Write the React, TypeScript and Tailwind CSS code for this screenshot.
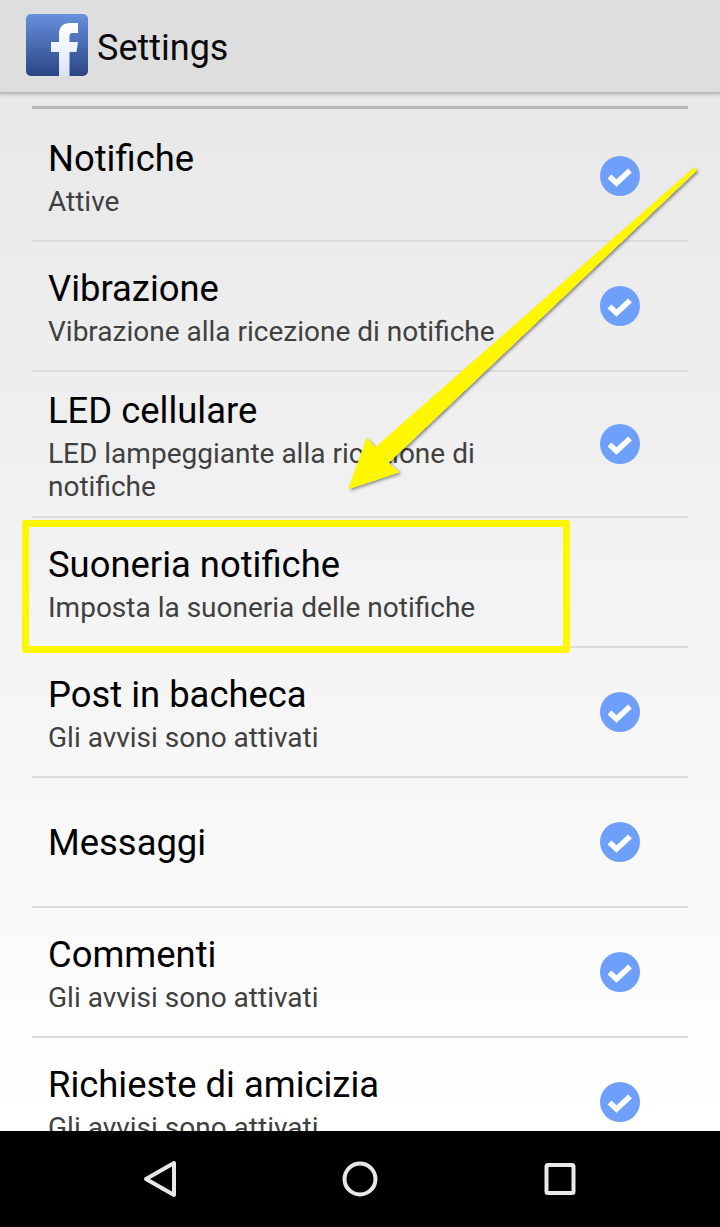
import React from 'react';

interface SettingRow {
  title: string;
  sub?: string;
  checked: boolean;
  tall?: boolean;
}

const rows: SettingRow[] = [
  { title: 'Notifiche', sub: 'Attive', checked: true },
  { title: 'Vibrazione', sub: 'Vibrazione alla ricezione di notifiche', checked: true },
  { title: 'LED cellulare', sub: 'LED lampeggiante alla ricezione di notifiche', checked: true, tall: true },
  { title: 'Suoneria notifiche', sub: 'Imposta la suoneria delle notifiche', checked: false },
  { title: 'Post in bacheca', sub: 'Gli avvisi sono attivati', checked: true },
  { title: 'Messaggi', checked: true },
  { title: 'Commenti', sub: 'Gli avvisi sono attivati', checked: true },
  { title: 'Richieste di amicizia', sub: 'Gli avvisi sono attivati', checked: true },
];

function CheckBadge() {
  return (
    <svg width="40" height="40" viewBox="0 0 40 40" className="shrink-0">
      <circle cx="20" cy="20" r="20" fill="#6ea0fb" />
      <path d="M9.500 20.500 L16.500 27 L30 14.500" fill="none" stroke="#fff" strokeWidth="5.500" />
    </svg>
  );
}

function FbLogo() {
  return (
    <svg width="62" height="62" viewBox="0 0 62 62" className="shrink-0">
      <defs>
        <linearGradient id="fbBg" x1="0" y1="0" x2="0" y2="1">
          <stop offset="0" stopColor="#6790dd" />
          <stop offset="1" stopColor="#2a4483" />
        </linearGradient>
        <linearGradient id="fbF" x1="0" y1="0" x2="0" y2="1">
          <stop offset="0" stopColor="#ffffff" />
          <stop offset="1" stopColor="#dbe4f5" />
        </linearGradient>
      </defs>
      <rect width="62" height="62" rx="5" fill="url(#fbBg)" />
      <path
        d="M33 62 V38 H25 V28 H33 V20 C33 12 38 9 45 9 H52 V19 H47 C44 19 43.500 20 43.500 23 V28 H52 L50.500 38 H43.500 V62 Z"
        fill="url(#fbF)"
      />
    </svg>
  );
}

export default function App() {
  return (
    <div className="relative h-[1227px] w-[720px] overflow-hidden font-['Roboto',sans-serif]">
      <div className="relative z-10 flex h-[94px] items-center gap-[9px] border-b-2 border-[#bdbdbd] bg-[#dedede] pb-[3px] pl-[26px] shadow-[0_1px_3px_rgba(0,0,0,0.15)]">
        <FbLogo />
        <span className="mt-[7px] text-[36px] text-[#0a0a0a]">Settings</span>
      </div>

      <div className="h-[1037px] overflow-hidden bg-gradient-to-b from-[#e8e8e8] to-white px-8 pt-3">
        <div className="mb-[3px] h-[3px] bg-[#b9b9b9]" />
        {rows.map((r) => (
          <div
            key={r.title}
            className={`flex items-center justify-between border-b-2 border-[#dcdcdc] pr-12 pl-4 ${r.tall ? 'h-[146px]' : 'h-[130px]'}`}
          >
            <div className={`flex flex-col ${r.tall ? 'w-[470px]' : ''}`}>
              <div className="text-[36.4px] leading-[49px] text-black">{r.title}</div>
              {r.sub && <div className="mt-[2px] text-[28px] leading-[33px] text-[#404040]">{r.sub}</div>}
            </div>
            {r.checked && <CheckBadge />}
          </div>
        ))}
      </div>

      <div className="flex h-[96px] items-center justify-center bg-black">
        <div className="grid w-[600px] grid-cols-3 justify-items-center">
          <svg width="40" height="40" viewBox="0 0 40 40">
            <path d="M34 4 V36 L6 20 Z" fill="none" stroke="#e8e8e8" strokeWidth="4" strokeLinejoin="round" />
          </svg>
          <svg width="40" height="40" viewBox="0 0 40 40">
            <circle cx="20" cy="20" r="15.500" fill="none" stroke="#e8e8e8" strokeWidth="4" />
          </svg>
          <svg width="40" height="40" viewBox="0 0 40 40">
            <rect x="6.500" y="6" width="27" height="28" rx="1.500" fill="none" stroke="#e8e8e8" strokeWidth="4" />
          </svg>
        </div>
      </div>

      {/* callout: yellow frame + arrow drawn over the list */}
      <div className="absolute top-[520px] left-[22px] z-20 h-[133px] w-[548px] rounded-[3px] border-[7px] border-[#fff700]" />
      <svg className="absolute top-0 left-0 z-20" width="720" height="1227" viewBox="0 0 720 1227">
        <defs>
          <filter id="arrowShadow" x="-10%" y="-10%" width="120%" height="120%">
            <feDropShadow dx="1.500" dy="1.500" stdDeviation="1.500" floodColor="#000" floodOpacity="0.45" />
          </filter>
        </defs>
        <path
          d="M694 168 L696.500 170.500 L388 463 L399 472 L349 488.500 L367 438 L375 448 Z"
          fill="#fff700"
          stroke="#fff700"
          strokeWidth="1"
          strokeLinejoin="round"
          filter="url(#arrowShadow)"
        />
      </svg>
    </div>
  );
}
